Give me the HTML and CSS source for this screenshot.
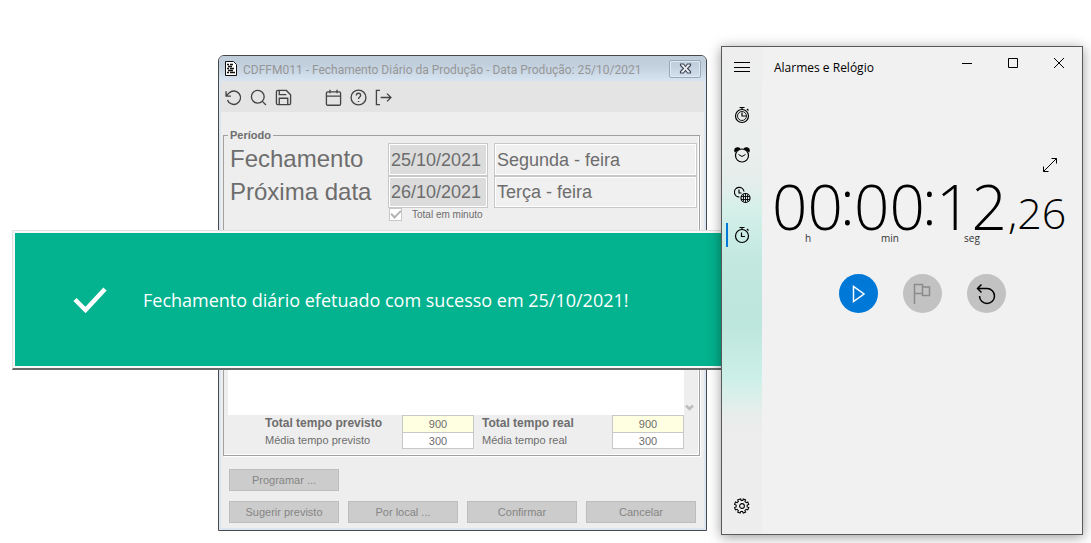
FILE: index.html
```html
<!DOCTYPE html>
<html lang="pt-BR">
<head>
<meta charset="utf-8">
<title>Fechamento Diário da Produção</title>
<link rel="stylesheet" href="styles.css">
</head>
<body>
<main class="desktop">
  <section class="erp">
    <header class="erp-title">
      <svg class="doc" width="14" height="17" viewBox="0 0 14 17"><path d="M1.500 1.500h8l3 3v11h-11z" fill="#fff" stroke="#111"/><path d="M3 4.500h2M6 4.500h3M4 6.500h4M3 8.500h2M6 8.500h4M4 10.500h5M3 12.500h2M6 12.500h5" stroke="#111" stroke-width="1.400"/></svg>
      <h1>CDFFM011 - Fechamento Diário da Produção - Data Produção: 25/10/2021</h1>
      <button class="erp-close" aria-label="Fechar"><svg width="13" height="11" viewBox="0 0 13 11"><path d="M1.500 1h3l2 2.500 2-2.500h3v1.500l-3 3 3 3V10h-3l-2-2.500L4.500 10h-3V8.500l3-3-3-3z" fill="#f4f7fa" stroke="#44495a" stroke-width="1.200"/></svg></button>
    </header>
    <nav class="toolbar">
      <button aria-label="Desfazer"><svg viewBox="0 0 24 24"><path d="M1.500 3v7h7M3.500 15.500A9.500 9.500 0 1 0 5.800 5.500L1.500 10"/></svg></button>
      <button aria-label="Pesquisar"><svg viewBox="0 0 24 24"><circle cx="11" cy="11" r="9"/><path d="M17.500 17.500 22.500 22.500"/></svg></button>
      <button aria-label="Salvar"><svg viewBox="0 0 24 24"><path d="M20 22H4a2 2 0 0 1-2-2V4a2 2 0 0 1 2-2h12l6 6v12a2 2 0 0 1-2 2zM18 22v-9H6v9M6 2v6h10"/></svg></button>
      <button class="apart" aria-label="Calendário"><svg viewBox="0 0 24 24"><rect x="2" y="4" width="20" height="19" rx="2"/><path d="M7 1v5M17 1v5M2 10h20"/></svg></button>
      <button aria-label="Ajuda"><svg viewBox="0 0 24 24"><circle cx="12" cy="12" r="10.500"/><path d="M9 9a3 3 0 0 1 6 0c0 2-3 2.600-3 5M12 17v1.500"/></svg></button>
      <button aria-label="Sair"><svg viewBox="0 0 24 24"><path d="M7 2H2v20h5M8 12h14M17 6.500l5.500 5.500-5.500 5.500"/></svg></button>
    </nav>
    <form class="erp-body">
      <fieldset class="period">
        <legend>Período</legend>
        <div class="dates">
          <label for="d1">Fechamento</label><input id="d1" class="date" value="25/10/2021" readonly><input class="weekday" aria-label="Dia do fechamento" value="Segunda - feira" readonly>
          <label for="d2">Próxima data</label><input id="d2" class="date" value="26/10/2021" readonly><input class="weekday" aria-label="Dia da próxima data" value="Terça - feira" readonly>
          <div class="minutes"><input id="tm" type="checkbox" checked disabled><label for="tm">Total em minuto</label></div>
        </div>
        <div class="list"><div class="rows"></div><div class="scroll"><svg width="9" height="7" viewBox="0 0 9 7"><path d="M1 1.500l3.500 3.500L8 1.500" fill="none" stroke="#bdbdbd" stroke-width="2.500"/></svg></div></div>
        <div class="totals">
          <label class="strong" for="tp">Total tempo previsto</label><input id="tp" class="sum" value="900" readonly>
          <label class="strong second" for="tr">Total tempo real</label><input id="tr" class="sum" value="900" readonly>
          <label for="mp">Média tempo previsto</label><input id="mp" value="300" readonly>
          <label class="second" for="mr">Média tempo real</label><input id="mr" value="300" readonly>
        </div>
      </fieldset>
      <div class="actions">
        <button type="button" class="first">Programar ...</button>
        <button type="button">Sugerir previsto</button>
        <button type="button">Por local ...</button>
        <button type="button">Confirmar</button>
        <button type="button">Cancelar</button>
      </div>
    </form>
  </section>

  <section class="toast" role="status">
    <svg width="34" height="26" viewBox="0 0 34 26"><path d="M2 12.500 12.500 23 32 2" fill="none" stroke="#fff" stroke-width="4.500"/></svg>
    <p>Fechamento diário efetuado com sucesso em 25/10/2021!</p>
  </section>

  <section class="clock">
    <nav class="side">
      <button class="menu" aria-label="Menu"><svg width="16" height="16" viewBox="0 0 16 16"><path d="M0 3.500h16M0 8.500h16M0 12.500h16"/></svg></button>
      <button aria-label="Temporizador"><svg width="16" height="18" viewBox="0 0 16 18"><circle cx="8" cy="10" r="6.500"/><circle cx="8" cy="10" r="4.500" stroke-width=".9"/><path d="M5.500 1.500h5M8 1.500v2M13 3l1.500 1.500M8 6.500V10h4"/></svg></button>
      <button aria-label="Alarme"><svg width="16" height="18" viewBox="0 0 16 18"><circle cx="8" cy="9.500" r="6.500"/><path d="M4.500 8.500 8 10.500l3.500-2" stroke-width="1"/><path d="M1 5.500C0 2 4 1 5.500 2.500zM15 5.500C16 2 12 1 10.500 2.500z" fill="#000"/></svg></button>
      <button aria-label="Relógio mundial"><svg width="17" height="18" viewBox="0 0 17 18"><path d="M5.500 11A4.800 4.800 0 1 1 10 5.500M5 3.500V7h2.500"/><circle cx="11.500" cy="12" r="4.500"/><path d="M7 10.500h9M7 13.500h9M11.500 7.500v9M9.500 8.500v7M13.500 8.500v7" stroke-width=".9"/></svg></button>
      <button class="current" aria-label="Cronômetro"><svg width="16" height="18" viewBox="0 0 16 18"><circle cx="8" cy="10" r="6.500"/><path d="M5.500 1.500h5M8 1.500v2M13 3l1.500 1.500M7.500 6.500v4h3.500"/></svg></button>
      <button class="settings" aria-label="Configurações"><svg width="16" height="16" viewBox="0 0 18 18"><circle cx="9" cy="9" r="2.700"/><path d="M7.600 1 8 2.800h2L10.400 1l2.600 1-.7 1.800 1.400 1.400 1.800-.7 1.100 2.700-1.800.8v2l1.800.8-1.100 2.600-1.800-.7-1.400 1.400.7 1.800-2.600 1.100-.8-1.800h-2L6.800 17l-2.600-1.100.7-1.800-1.400-1.400-1.800.7L.6 10.800 2.400 10V8L.6 7.200l1.100-2.700 1.800.7 1.400-1.400L4.200 2z"/></svg></button>
    </nav>
    <div class="clock-main">
      <header class="clock-head">
        <h2>Alarmes e Relógio</h2>
        <button aria-label="Minimizar"><svg width="10" height="10" viewBox="0 0 10 10"><path d="M0 5.500h10"/></svg></button>
        <button aria-label="Maximizar"><svg width="10" height="10" viewBox="0 0 10 10"><path d="M.5.500h9v9h-9z"/></svg></button>
        <button aria-label="Fechar"><svg width="10" height="10" viewBox="0 0 10 10"><path d="M0 0l10 10M10 0 0 10"/></svg></button>
      </header>
      <button class="expand" aria-label="Expandir"><svg width="16" height="16" viewBox="0 0 16 16"><path d="M1.500 14.500l13-13M9.500 1.500h5v5M1.500 9.500v5h5"/></svg></button>
      <div class="time">
        <div class="unit"><b>00</b><small>h</small></div><b class="colon">:</b>
        <div class="unit"><b>00</b><small>min</small></div><b class="colon">:</b>
        <div class="unit"><b>12</b><small>seg</small></div>
        <span class="frac">,26</span>
      </div>
      <div class="controls">
        <button class="play" aria-label="Iniciar"><svg width="20" height="20" viewBox="0 0 20 20"><path d="M5.500 2.500v15L16 10z"/></svg></button>
        <button aria-label="Volta" disabled><svg width="20" height="22" viewBox="0 0 20 22"><path d="M2.500 21V1.500h8v9h-8M10.500 4h7v8.500h-7v-2"/></svg></button>
        <button aria-label="Redefinir"><svg width="20" height="22" viewBox="0 0 20 22"><path d="M5.500 1.500 1.500 5.500l4 4M1.500 5.500H11a7.500 7.500 0 1 1-7.500 7.500"/></svg></button>
      </div>
    </div>
  </section>
</main>
</body>
</html>
```
FILE: styles.css
```css
* { box-sizing: border-box; }
body { margin: 0; background: #fff; font-family: "Liberation Sans", Arial, sans-serif; font-size: 11px; color: #6d6d6d; }
button { padding: 0; border: 0; background: none; font: inherit; color: inherit; display: flex; align-items: center; justify-content: center; }
input { font: inherit; color: inherit; margin: 0; min-width: 0; border: 1px solid #c8c8c8; border-radius: 0; outline: 0; }
h1, h2, p { margin: 0; font-weight: 400; }
.desktop { position: relative; min-height: 100vh; overflow: hidden; }

.erp { position: absolute; left: 218px; right: 384px; top: 55px; bottom: 12px; display: flex; flex-direction: column; border: 1px solid #484848; border-radius: 6px 6px 0 0; background: #eee; box-shadow: inset 0 0 0 2px #dbe6f2; overflow: hidden; }
.erp-title { display: flex; align-items: center; height: 25px; padding: 0 5px 0 5px; gap: 5px; background: linear-gradient(#bfcddb, #c3d1df 40%, #d7e4f2); }
.erp-title h1 { flex: 1; font: 12px/16px Roboto, "Noto Sans", sans-serif; color: #969696; white-space: nowrap; padding-top: 2px; }
.erp-close { width: 32px; height: 18px; border: 1px solid #9ba8b5; border-radius: 2px; box-shadow: inset 0 0 0 1px #e0e9f2; }
.toolbar { display: flex; align-items: center; gap: 8px; height: 31px; margin: 0 2px; padding: 2px 4px 0; background: #e4e4e4; }
.toolbar .apart { margin-left: 25px; }
.toolbar svg { width: 17px; height: 17px; fill: none; stroke: #444; stroke-width: 1.900; }
.erp-body { flex: 1; display: flex; flex-direction: column; padding: 16px 6px 7px 4px; }
.period { flex: 1; display: flex; flex-direction: column; min-width: 0; margin: 0; padding: 1px 2px 6px 4px; border: 1px solid #a0a0a0; box-shadow: inset -1px -1px #fff, 1px 1px #fff; }
.period legend { padding: 0 2px; font-weight: 700; line-height: 14px; }
.dates { display: grid; grid-template-columns: 158px 100px 1fr; grid-template-rows: 33px 32px 13px; padding-left: 2px; }
.dates > label { font-size: 24px; line-height: 32px; }
.dates > input { font-size: 18px; line-height: 28px; padding: 0 2px; box-shadow: inset 1px 1px #fff, inset -1px -1px #fff; }
.dates .date { background: #dcdcdc; }
.dates .weekday { margin-left: 6px; background: #f0f0f0; }
.minutes { grid-column: 2 / 4; display: flex; align-items: center; gap: 10px; margin-left: 1px; font-size: 10px; }
.minutes input { appearance: none; width: 13px; height: 13px; background: #fff; display: grid; place-items: center; }
.minutes input::after { content: ""; width: 8px; height: 4px; margin-bottom: 3px; border: solid #b4b4b4; border-width: 0 0 2px 2px; transform: rotate(-45deg); }
.list { flex: 1; display: flex; margin-top: 16px; }
.rows { flex: 1; background: #fff; }
.scroll { display: flex; align-items: flex-end; width: 13px; padding: 0 3px 4px 1px; }
.totals { display: grid; grid-template-columns: 137px 72px 1fr 72px; grid-auto-rows: 17px; padding: 0 13px 0 37px; line-height: 16px; }
.totals input { text-align: center; background: #fff; }
.totals .sum { background: #ffffe1; border-bottom: 0; }
.totals label { white-space: nowrap; }
.totals .strong { font-size: 12px; font-weight: 700; }
.totals .second { padding-left: 8px; }
.actions { display: grid; grid-template-columns: repeat(4, 1fr); gap: 10px 9px; padding: 13px 4px 0 6px; }
.actions button { height: 22px; border: 1px solid #bdbdbd; background: #ccc; color: #858585; }
.actions .first, .actions .first + button { grid-column: 1; }

.toast { position: absolute; left: 12px; right: 365px; top: 230px; height: 140px; display: flex; align-items: center; gap: 36px; padding-left: 60px; background: #03b28e; border: 1px solid #e0e0e0; border-bottom: 2px solid #696969; box-shadow: inset 0 0 0 2px #f8f8f8; color: #fff; }
.toast p { font: 18px/24px "Open Sans", "Noto Sans", sans-serif; white-space: nowrap; }

.clock { position: absolute; right: 8px; top: 46px; bottom: 8px; width: 362px; display: flex; border: 1px solid #5a5a5a; background: #f1f1f1; color: #000; box-shadow: 0 2px 12px rgba(0, 0, 0, .4); font-family: "Open Sans", "Noto Sans", sans-serif; }
.clock svg { fill: none; stroke: #000; }
.side { display: flex; flex-direction: column; width: 40px; background: linear-gradient(#eee 0, #eaeeed 22%, #e2eeeb 29%, #d3f0e9 34%, #c2e8df 44%, #bde6dc 57%, #ccf0e8 68%, #e3eeeb 74%, #ececec 78%, #eee); }
.side button { height: 40px; width: 40px; }
.side .menu { margin-bottom: 8px; }
.side .menu svg { shape-rendering: crispEdges; }
.side .current { border-left: 2px solid #0078d7; width: 36px; height: 24px; margin: 8px 0 0 4px; padding-right: 6px; }
.side svg { stroke-width: 1.200; }
.side .settings { margin-top: auto; margin-bottom: 8px; }
.clock-main { flex: 1; display: flex; flex-direction: column; }
.clock-head { display: flex; align-items: center; height: 32px; padding-left: 12px; }
.clock-head h2 { flex: 1; font-size: 12px; line-height: 16px; padding-top: 9px; }
.clock-head button { width: 46px; height: 32px; }
.expand { align-self: flex-end; width: 24px; height: 24px; margin: 74px 20px 4px 0; }
.time { display: flex; height: 84px; padding-left: 10px; line-height: 50px; white-space: nowrap; }
.time b { font-weight: 300; font-size: 62px; }
.unit { display: flex; flex-direction: column; width: 68px; }
.unit b { height: 50px; }
.unit small { padding-left: 4px; font-size: 10px; line-height: 14px; text-align: center; color: #333; }
.time .colon { width: 14px; line-height: 40px; }
.frac { padding: 7px 0 0 4px; font-size: 43px; font-weight: 300; }
.controls { display: flex; justify-content: center; gap: 25px; margin-top: 9px; }
.controls button { width: 39px; height: 39px; border-radius: 50%; background: #c2c2c2; }
.controls svg { stroke-width: 1.500; }
.controls .play { background: #0078d7; }
.controls .play svg { stroke: #fff; }
.controls button:disabled svg { stroke: #8b8b8b; }
```
